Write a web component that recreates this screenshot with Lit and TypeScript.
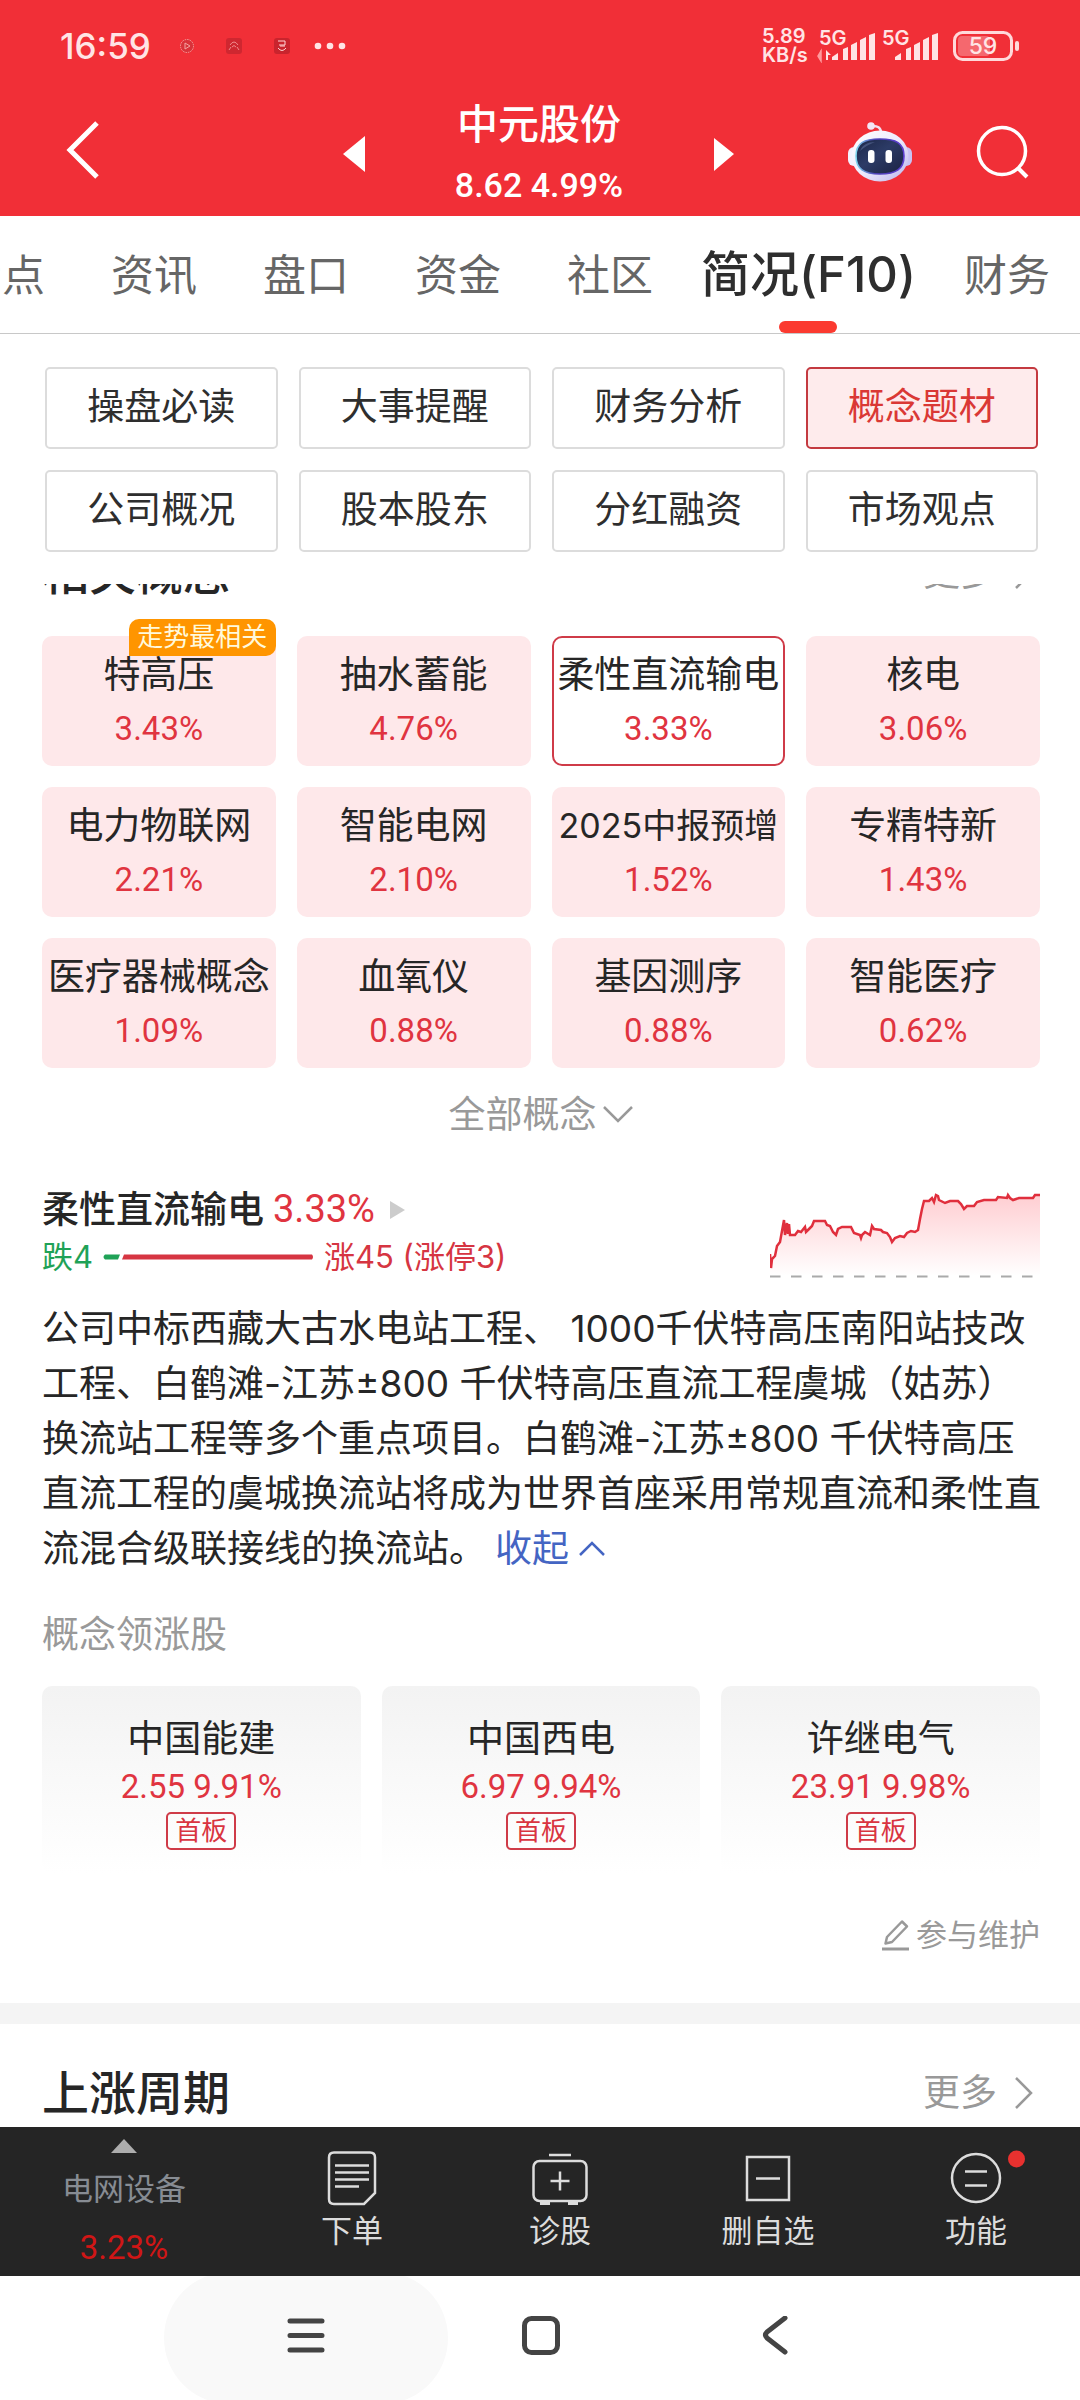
import { LitElement, html, css, svg } from "lit";
import { customElement } from "lit/decorators.js";
import { classMap } from "lit/directives/class-map.js";

const TABS = ["看点", "资讯", "盘口", "资金", "社区", "简况(F10)", "财务"];
const SECTIONS = ["操盘必读", "大事提醒", "财务分析", "概念题材", "公司概况", "股本股东", "分红融资", "市场观点"];

const CONCEPTS: { name: string; pct: string; badge?: string; selected?: boolean; small?: boolean }[] = [
  { name: "特高压", pct: "3.43%", badge: "走势最相关" },
  { name: "抽水蓄能", pct: "4.76%" },
  { name: "柔性直流输电", pct: "3.33%", selected: true },
  { name: "核电", pct: "3.06%" },
  { name: "电力物联网", pct: "2.21%" },
  { name: "智能电网", pct: "2.10%" },
  { name: "2025中报预增", pct: "1.52%", small: true },
  { name: "专精特新", pct: "1.43%" },
  { name: "医疗器械概念", pct: "1.09%" },
  { name: "血氧仪", pct: "0.88%" },
  { name: "基因测序", pct: "0.88%" },
  { name: "智能医疗", pct: "0.62%" },
];

const LEADERS = [
  { name: "中国能建", quote: "2.55 9.91%", tag: "首板" },
  { name: "中国西电", quote: "6.97 9.94%", tag: "首板" },
  { name: "许继电气", quote: "23.91 9.98%", tag: "首板" },
];

const TREND =
  "0,65 1,79 2,70 5,67 7,57 10,53 12,42 14,31 15,46 17,34 18,45 19,35 20,46 25,46 28,42 31,43 35,38 36,43 39,40 42,37 44,32 55,32 57,36 60,37 63,43 66,46 68,40 72,38 81,38 84,44 90,46 91,49 92,46 95,43 100,46 102,37 104,40 111,41 113,43 117,44 120,48 122,53 125,49 130,47 134,48 137,44 141,42 145,43 148,41 150,30 152,20 154,12 159,12 162,9 164,13 166,6 168,7 169,11 175,14 180,12 188,12 191,15 194,20 197,17 204,17 207,13 214,11 226,11 228,8 237,9 238,6 240,9 243,11 249,9 263,9 265,6 270,6";

const signal = (arrows: boolean) => html`
  <svg class="signal" width="60" height="34" viewBox="0 0 60 34" aria-hidden="true">
    ${arrows
      ? svg`<path d="M4 21v10M1 27l3 5V22z" fill="#ff9a9d" stroke="#ff9a9d" stroke-width="1.5"/>
            <path d="M9 31V21l5 5h-3v5z" fill="#ffe4e5"/>`
      : null}
    <g fill="#ffe4e5">
      <path d="M15 31v-3l6-4v7z" /><path d="M26 31V20l5-2v13z" />
      <path d="M34 31V16l6-3v18z" /><path d="M43 31V11l6-3v23z" />
      <path d="M52 31V6l6-2v27z" />
    </g>
  </svg>`;

@customElement("status-bar")
class StatusBar extends LitElement {
  static styles = css`
    :host { display: block; font-family: Inter, "Noto Sans CJK SC", sans-serif; }
    .bar { display: flex; align-items: center; height: 92px; padding: 0 59px 0 60px; color: #ffe4e5; }
    .time { font-size: 35px; font-weight: 500; line-height: 44px; }
    .notices { display: flex; align-items: center; margin-left: 28px; }
    .spacer { flex: 1; }
    .rate { display: flex; flex-direction: column; font-size: 20px; line-height: 19px; font-weight: 600; width: 52px; white-space: nowrap; }
    .cell { display: grid; margin-left: 3px; }
    .cell > * { grid-area: 1 / 1; }
    .gen { font-size: 20px; line-height: 18px; font-weight: 600; padding-left: 2px; }
    .battery { margin-left: 13px; }
    text { font-family: Inter, sans-serif; font-size: 23px; font-weight: 500; fill: #ffe4e5; }
  `;

  render() {
    return html`<div class="bar">
      <span class="time">16:59</span>
      <svg class="notices" width="170" height="20" viewBox="0 0 170 20" aria-hidden="true">
        <g fill="none" stroke-width="1">
          <circle cx="8" cy="10" r="6.5" fill="#d9323a" stroke="#f3a2a0" stroke-dasharray="1.5 1" />
          <path d="M6 7l5 3-5 3z" stroke="#f3a2a0" />
          <rect x="47" y="2" width="16" height="16" rx="3" fill="#cf2730" />
          <path d="M51 9q4-6 8 0M53 11q2-3 4 0M50 14l2-3M58 11l2 3" stroke="#f08a8c" />
          <rect x="95" y="2" width="16" height="16" rx="3" fill="#c9242d" />
          <path d="M99 5h7v4h-6M99 12q4 5 8 0M101 10h5" stroke="#ffd5d5" />
        </g>
        <g fill="#ffe4e5"><circle cx="139" cy="10" r="3.3" /><circle cx="151" cy="10" r="3.3" /><circle cx="163" cy="10" r="3.3" /></g>
      </svg>
      <span class="spacer"></span>
      <span class="rate"><span>5.89</span><span>KB/s</span></span>
      <span class="cell">${signal(true)}<span class="gen">5G</span></span>
      <span class="cell">${signal(false)}<span class="gen">5G</span></span>
      <svg class="battery" width="68" height="30" viewBox="0 0 68 30" role="img" aria-label="59">
        <rect x="5" y="5" width="32" height="20" rx="4" fill="#fff" fill-opacity=".28" />
        <rect x="1.5" y="1.5" width="57" height="27" rx="8" fill="none" stroke="#ffd9da" stroke-width="3" />
        <rect x="62" y="10" width="4" height="10" rx="2" fill="#ffd9da" />
        <text x="30" y="23" text-anchor="middle">59</text>
      </svg>
    </div>`;
  }
}

@customElement("stock-header")
class StockHeader extends LitElement {
  static styles = css`
    :host { display: block; font-family: Inter, "Noto Sans CJK SC", sans-serif; }
    button { border: 0; padding: 0; background: none; color: inherit; font: inherit; display: block; cursor: pointer; }
    svg { display: block; }
    .row { display: grid; grid-template-columns: 1fr auto 1fr; align-items: center; height: 124px; padding: 0 50px 0 66px; color: #fff; }
    .back { padding-bottom: 8px; }
    .stock { display: flex; align-items: center; gap: 90px; margin-left: -18px; }
    .title { text-align: center; margin: 0; white-space: nowrap; }
    .name { display: block; font-size: 41px; line-height: 56px; font-weight: 500; }
    .quote { display: block; font-family: Roboto, sans-serif; font-size: 34px; line-height: 40px; font-weight: 500; padding: 13px 0 7px; }
    .tools { display: flex; justify-content: flex-end; align-items: center; gap: 64px; padding-bottom: 4px; }
  `;

  render() {
    return html`<header class="row">
      <button class="back" aria-label="返回">
        <svg width="34" height="58" viewBox="0 0 34 58"><path d="M31 2L4 29l27 27" fill="none" stroke="#fff" stroke-width="5" /></svg>
      </button>
      <div class="stock">
        <button aria-label="上一只"><svg width="22" height="36" viewBox="0 0 22 36"><path d="M22 0v36L0 18z" fill="#fff" /></svg></button>
        <h1 class="title"><span class="name">中元股份</span><span class="quote">8.62 4.99%</span></h1>
        <button aria-label="下一只"><svg width="22" height="36" viewBox="0 0 22 36"><path d="M1 2v33l20-17z" fill="#fff" /></svg></button>
      </div>
      <div class="tools">
        <button aria-label="智能助手">
          <svg width="64" height="60" viewBox="0 0 64 60">
            <defs>
              <linearGradient id="shell" x1="0" y1="0" x2="1" y2="1">
                <stop offset="0" stop-color="#fff" /><stop offset=".5" stop-color="#eeecfd" /><stop offset="1" stop-color="#b9b3ec" />
              </linearGradient>
              <linearGradient id="visor" x1="0" y1="0" x2="1" y2="1">
                <stop offset="0" stop-color="#1c2748" /><stop offset=".45" stop-color="#2c3b66" /><stop offset="1" stop-color="#1b2242" />
              </linearGradient>
              <linearGradient id="rim" x1="0" y1="0" x2="1" y2="0">
                <stop offset="0" stop-color="#7fd6ee" /><stop offset=".4" stop-color="#4c3fb8" /><stop offset="1" stop-color="#5d3fd0" />
              </linearGradient>
            </defs>
            <path d="M23 4q10-1 10 7" fill="none" stroke="#f3dff0" stroke-width="2.5" />
            <circle cx="23" cy="4" r="3.8" fill="#f3e6f6" />
            <rect x="0" y="25" width="12" height="19" rx="6" fill="#f4f2fe" />
            <rect x="52" y="25" width="12" height="19" rx="6" fill="#c9c2f3" />
            <ellipse cx="32" cy="34" rx="28.500" ry="25.500" fill="url(#shell)" />
            <path d="M32 17c16 0 24 4 24 17S48 52 32 52 8 47 8 34s8-17 24-17z" fill="url(#visor)" stroke="url(#rim)" stroke-width="1.600" />
            <path d="M12 29c2-6 8-9 15-9-5 2-11 5-15 9z" fill="#5a6a96" opacity=".6" />
            <rect x="20" y="28" width="6.500" height="13" rx="3" fill="#fff" />
            <rect x="37.500" y="28" width="6.500" height="13" rx="3" fill="#fff" />
          </svg>
        </button>
        <button aria-label="搜索">
          <svg width="54" height="56" viewBox="0 0 54 56">
            <circle cx="26" cy="27" r="23.500" fill="none" stroke="#fff" stroke-width="3.500" />
            <path d="M42 44l9 9" stroke="#fff" stroke-width="4" />
          </svg>
        </button>
      </div>
    </header>`;
  }
}

@customElement("trade-bar")
class TradeBar extends LitElement {
  static styles = css`
    :host { display: block; font-family: Inter, "Noto Sans CJK SC", sans-serif; }
    .bar { display: grid; grid-template-columns: 248fr 208fr 208fr 208fr 208fr; height: 149px; background: #252525; }
    button { border: 0; padding: 0; background: none; font: inherit; font-size: 31px; line-height: 38px; color: #dcdcdc; display: flex; flex-direction: column; align-items: center; cursor: pointer; }
    svg { display: block; overflow: visible; }
    .item { padding-top: 22px; gap: 5px; }
    .board { padding-top: 12px; color: #878c93; }
    .sector { padding-top: 17px; }
    .change { font-family: Roboto, sans-serif; font-size: 33px; color: #d01616; padding-top: 21px; }
  `;

  render() {
    return html`<nav class="bar">
      <button class="board">
        <svg width="26" height="14" viewBox="0 0 26 14"><path d="M13 0l13 14H0z" fill="#adadad" /></svg>
        <span class="sector">电网设备</span><span class="change">3.23%</span>
      </button>
      <button class="item">
        <svg width="56" height="58" viewBox="0 0 56 58" fill="none" stroke="#dcdcdc" stroke-width="2.500">
          <path d="M10 3.500h36q5 0 5 5V44L40 55H10q-5 0-5-5V8.500q0-5 5-5z" />
          <path d="M11 16.500h34M11 23.500h34M11 30.500h34M11 37.500h24" />
        </svg><span>下单</span>
      </button>
      <button class="item">
        <svg width="56" height="58" viewBox="0 0 56 58" fill="none" stroke="#dcdcdc" stroke-width="2.500">
          <rect x="1.500" y="12" width="53" height="40" rx="6" />
          <path d="M17 6h22M18.500 32h19M28 22.500v19" /><path d="M8 54h10M36 54h10" stroke-width="4" />
        </svg><span>诊股</span>
      </button>
      <button class="item">
        <svg width="56" height="58" viewBox="0 0 56 58" fill="none" stroke="#dcdcdc" stroke-width="2.500">
          <rect x="7" y="8" width="42" height="43" /><path d="M16 29.500h24" />
        </svg><span>删自选</span>
      </button>
      <button class="item">
        <svg width="56" height="58" viewBox="0 0 56 58" fill="none" stroke="#dcdcdc" stroke-width="2.500">
          <circle cx="28" cy="29" r="24" /><path d="M17 22.500h22M17 36.500h22" />
          <circle cx="68.500" cy="10" r="8.500" fill="#e8312f" stroke="none" />
        </svg><span>功能</span>
      </button>
    </nav>`;
  }
}

@customElement("system-nav")
class SystemNav extends LitElement {
  static styles = css`
    :host { display: block; }
    .bar { display: flex; justify-content: center; align-items: center; height: 124px; overflow: hidden; background: #fff; }
    button { border: 0; padding: 0 0 4px; background: none; display: grid; place-items: center; cursor: pointer; }
    svg { display: block; }
    .recent { width: 284px; height: 132px; border-radius: 66px; background: #f9f9f9; }
    .home { width: 186px; height: 124px; }
    .back { width: 282px; height: 124px; }
    path, rect { fill: none; stroke: #444; stroke-width: 5; stroke-linecap: round; stroke-linejoin: round; }
  `;

  render() {
    return html`<nav class="bar">
      <button class="recent" aria-label="最近任务"><svg width="38" height="40" viewBox="0 0 38 40"><path d="M3 5h32M3 19.500h32M3 34h32" /></svg></button>
      <button class="home" aria-label="主屏幕"><svg width="40" height="40" viewBox="0 0 40 40"><rect x="3.500" y="2.500" width="33" height="34" rx="7" /></svg></button>
      <button class="back" aria-label="返回"><svg width="26" height="40" viewBox="0 0 26 40"><path d="M23 2L5 16q-3 3 0 6l18 14" /></svg></button>
    </nav>`;
  }
}

@customElement("app-root")
class AppRoot extends LitElement {
  static styles = css`
    :host { display: block; font-family: Inter, "Noto Sans CJK SC", sans-serif; color: #262626; }
    .page { display: flex; flex-direction: column; height: 100vh; overflow: hidden; background: #fff; }
    .top { background: #f12f37; }
    button { border: 0; padding: 0; margin: 0; background: none; color: inherit; font: inherit; cursor: pointer; }
    a { color: inherit; text-decoration: none; }
    svg { display: block; }
    h2, h3, p { margin: 0; }

    .tabs { display: flex; gap: 66px; align-items: stretch; height: 117px; margin-left: -41px; border-bottom: 1px solid #c8c8c8; flex: none; }
    .tab { position: relative; flex: none; font-size: 43px; line-height: 116px; color: #666; white-space: nowrap; }
    .tab.active { font-size: 49px; font-weight: 500; color: #2e2e2e; margin: 0 -18px; }
    .tab.active::after { content: ""; position: absolute; left: 50%; bottom: 0; width: 58px; height: 12px; margin-left: -29px; border-radius: 6px; background: #fb3a30; }

    .sections { display: grid; grid-template-columns: repeat(4, 1fr); gap: 21px; padding: 33px 42px 32px 45px; flex: none; }
    .section { height: 82px; border: 2px solid #dcdcdc; border-radius: 5px; font-size: 37px; line-height: 76px; padding-bottom: 2px; color: #2e2e2e; }
    .section.active { border-color: #c43a40; background: #feebec; color: #da3835; }

    .scroll { flex: 1; min-height: 0; overflow: hidden; }
    .block { padding: 0 40px 0 42px; }
    .head { display: flex; justify-content: space-between; align-items: center; height: 66px; padding-right: 6px; }
    .head.scrolled { margin-top: -44px; }
    .head h2 { font-size: 47px; line-height: 66px; font-weight: 500; }
    .more { display: flex; align-items: center; gap: 17px; font-size: 37px; line-height: 50px; color: #999; }

    .concepts { display: grid; grid-template-columns: repeat(4, minmax(0, 1fr)); gap: 21px; margin-top: 30px; }
    .concept { position: relative; height: 130px; border-radius: 10px; background: #fee8ea; display: flex; flex-direction: column; align-items: center; padding-top: 13px; white-space: nowrap; }
    .concept.selected { background: #fff; box-shadow: inset 0 0 0 2px #cf3b48; }
    .concept-name { font-size: 37px; line-height: 52px; }
    .small .concept-name { font-size: 34px; }
    .pct { font-family: Roboto, sans-serif; color: #e03440; }
    .concept .pct { font-size: 33px; line-height: 44px; padding-top: 6px; }
    .badge { position: absolute; top: -17px; right: 0; width: 147px; height: 37px; border-radius: 10px 10px 10px 0; background: #ff9500; color: #fff9dc; font-size: 26px; line-height: 36px; }
    .all { display: flex; align-items: center; gap: 5px; margin: 22px auto 0; font-size: 37px; line-height: 50px; color: #999; }

    .detail { display: flex; justify-content: space-between; margin-top: 42px; }
    .title-line { display: flex; align-items: center; height: 55px; }
    .title-line h3 { font-size: 37px; line-height: 55px; font-weight: 500; }
    .title-line .pct { font-size: 38px; line-height: 55px; margin: 0 14px 0 9px; }
    .breadth { display: flex; align-items: center; gap: 10px; font-size: 31px; line-height: 40px; color: #d63542; }
    .down { color: #1fa257; }
    .chart { margin-top: 7px; }

    .intro { margin: 22px -8px 0 0; font-size: 37px; line-height: 55px; }
    .fold { display: inline-flex; align-items: center; gap: 10px; color: #4465c3; margin-left: 9px; }

    .sub { margin-top: 34px; font-size: 37px; line-height: 50px; font-weight: 400; color: #999; }
    .leaders { display: grid; grid-template-columns: repeat(3, 1fr); gap: 21px; margin-top: 26px; }
    .leader { height: 188px; border-radius: 10px; background: linear-gradient(#f3f3f3, #fff); display: flex; flex-direction: column; align-items: center; padding-top: 28px; box-sizing: border-box; }
    .leader-name { font-size: 37px; line-height: 50px; }
    .leader .pct { font-size: 33px; line-height: 46px; }
    .tag { width: 66px; border: 2px solid #cf3b48; border-radius: 5px; text-align: center; font-size: 26px; line-height: 34px; color: #d93440; margin-top: 2px; }
    .edit { display: flex; align-items: center; gap: 6px; margin: 41px 0 0 auto; font-size: 31px; line-height: 40px; color: #999; }
    .rule { height: 21px; margin: 48px 0 36px; background: #f4f4f4; }
  `;

  private more(scrolled: boolean, title: string) {
    return html`<div class=${classMap({ head: true, scrolled })}>
      <h2>${title}</h2>
      <a class="more" href="#">更多
        <svg width="20" height="32" viewBox="0 0 20 32"><path d="M2 1l15 15L2 31" fill="none" stroke="#999" stroke-width="2.500" /></svg>
      </a>
    </div>`;
  }

  render() {
    return html`<div class="page">
      <div class="top"><status-bar></status-bar><stock-header></stock-header></div>
      <nav class="tabs">
        ${TABS.map((t) => html`<button class=${classMap({ tab: true, active: t.startsWith("简况") })}>${t}</button>`)}
      </nav>
      <div class="sections">
        ${SECTIONS.map((s) => html`<button class=${classMap({ section: true, active: s === "概念题材" })}>${s}</button>`)}
      </div>

      <main class="scroll">
        <section class="block">
          ${this.more(true, "相关概念")}
          <div class="concepts">
            ${CONCEPTS.map(
              (c) => html`<button class=${classMap({ concept: true, selected: !!c.selected, small: !!c.small })}>
                <span class="concept-name">${c.name}</span><span class="pct">${c.pct}</span>
                ${c.badge ? html`<span class="badge">${c.badge}</span>` : null}
              </button>`
            )}
          </div>
          <button class="all">全部概念
            <svg width="32" height="18" viewBox="0 0 32 18"><path d="M2 1l14 14L30 1" fill="none" stroke="#999" stroke-width="2.500" /></svg>
          </button>

          <div class="detail">
            <div>
              <div class="title-line">
                <h3>柔性直流输电</h3><span class="pct">3.33%</span>
                <svg width="16" height="18" viewBox="0 0 16 18"><path d="M1 0l15 9L1 18z" fill="#ccc" /></svg>
              </div>
              <div class="breadth">
                <span class="down">跌4</span>
                <svg width="211" height="6" viewBox="0 0 211 6"><path d="M2 .5h15L15 5.500H2q-3-2.500 0-5z" fill="#1fa257" /><path d="M21 .5h188q2 2.500 0 5H19z" fill="#d63542" /></svg>
                <span>涨45 (涨停3)</span>
              </div>
            </div>
            <svg class="chart" width="270" height="90" viewBox="0 0 270 90" role="img" aria-label="分时走势">
              <defs><linearGradient id="area" x1="0" y1="0" x2="0" y2="1"><stop offset="0" stop-color="#ff3b4a" stop-opacity=".25" /><stop offset="1" stop-color="#ff3b4a" stop-opacity="0" /></linearGradient></defs>
              <polygon points="0,87 ${TREND} 270,87" fill="url(#area)" />
              <polyline points=${TREND} fill="none" stroke="#e02f3d" stroke-width="2.500" />
              <path d="M0 87.500h270" stroke="#aaa" stroke-width="2" stroke-dasharray="10.500 10.500" />
            </svg>
          </div>

          <p class="intro">
            公司中标西藏大古水电站工程、 1000千伏特高压南阳站技改<br />工程、白鹤滩-江苏±800 千伏特高压直流工程虞城（姑苏）<br />换流站工程等多个重点项目。白鹤滩-江苏±800 千伏特高压<br />直流工程的虞城换流站将成为世界首座采用常规直流和柔性直<br />流混合级联接线的换流站。<button class="fold">收起
              <svg width="26" height="15" viewBox="0 0 26 15"><path d="M1 14L13 2l12 12" fill="none" stroke="#4465c3" stroke-width="2.500" /></svg>
            </button>
          </p>

          <h3 class="sub">概念领涨股</h3>
          <div class="leaders">
            ${LEADERS.map(
              (l) => html`<a class="leader" href="#"><span class="leader-name">${l.name}</span><span class="pct">${l.quote}</span><span class="tag">${l.tag}</span></a>`
            )}
          </div>
          <button class="edit">
            <svg width="29" height="32" viewBox="0 0 29 32" fill="none" stroke="#999" stroke-width="2.500">
              <path d="M21 2.500l5 5L11 23l-6.500 1.500L6 18z" stroke-linejoin="round" /><path d="M1 30h27" stroke-width="3" />
            </svg>参与维护
          </button>
        </section>
        <div class="rule"></div>
        <section class="block">${this.more(false, "上涨周期")}</section>
      </main>

      <trade-bar></trade-bar>
      <system-nav></system-nav>
    </div>`;
  }
}
